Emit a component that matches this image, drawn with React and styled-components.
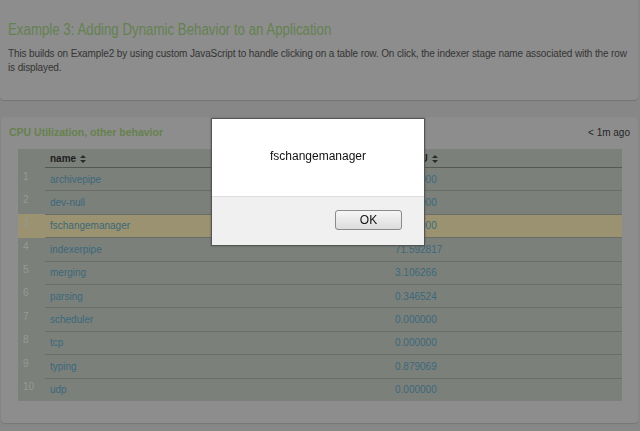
import React from 'react'
import styled, { createGlobalStyle } from 'styled-components'

const GlobalStyle = createGlobalStyle`
  html, body {
    margin: 0;
    padding: 0;
    background: #878787;
    font-family: "Liberation Sans", Arial, sans-serif;
  }
`

const rows = [
  { name: 'archivepipe', cpu: '0.000000' },
  { name: 'dev-null', cpu: '0.000000' },
  { name: 'fschangemanager', cpu: '0.000000', selected: true },
  { name: 'indexerpipe', cpu: '71.592817' },
  { name: 'merging', cpu: '3.106266' },
  { name: 'parsing', cpu: '0.346524' },
  { name: 'scheduler', cpu: '0.000000' },
  { name: 'tcp', cpu: '0.000000' },
  { name: 'typing', cpu: '0.879069' },
  { name: 'udp', cpu: '0.000000' },
]

const Page = styled.div`
  width: 640px;
  height: 431px;
  overflow: hidden;
  display: flex;
  flex-direction: column;
  gap: 17px;
`

const Intro = styled.section`
  margin: 0 2px 0 0;
  height: 100px;
  box-sizing: border-box;
  padding: 20px 8px 0;
  background: #8d8d8d;
  border-radius: 0 0 4px 4px;
  box-shadow: 0 1px 1px rgba(0, 0, 0, 0.15);
`

const Title = styled.h1`
  margin: 0;
  font-size: 16px;
  font-weight: normal;
  color: #648150;
  line-height: 20px;
  white-space: nowrap;
  transform: scaleX(0.83);
  transform-origin: left center;
`

const Description = styled.p`
  margin: 7px 0 0;
  font-size: 10px;
  letter-spacing: -0.12px;
  line-height: 14px;
  color: #343434;
`

const Panel = styled.section`
  margin: 0 2px 0 1px;
  height: 306px;
  box-sizing: border-box;
  padding: 8px 8px 0;
  background: #8d8d8d;
  border-radius: 4px;
  box-shadow: 0 1px 1px rgba(0, 0, 0, 0.12);
`

const PanelHeader = styled.div`
  display: flex;
  justify-content: space-between;
  align-items: center;
  height: 14px;
`

const PanelTitle = styled.h2`
  margin: 0;
  font-size: 10.5px;
  font-weight: bold;
  color: #66814c;
`

const Updated = styled.span`
  font-size: 10px;
  color: #262626;
`

const Table = styled.table`
  margin: 10px 0 0 9px;
  width: 604px;
  border-collapse: collapse;
  background: #7c807a;
  font-size: 10px;
`

const Th = styled.th`
  height: 18px;
  padding: 0 0 0 5px;
  text-align: left;
  font-weight: bold;
  color: #1e1e1e;
  border-bottom: ${p => (p.$index ? 'none' : '1px solid #555855')};
  width: ${p => p.$w || 'auto'};
`

const Tr = styled.tr`
  background: ${p => (p.$selected ? '#9a9270' : 'transparent')};
`

const Td = styled.td`
  height: 22.4px;
  padding: 0 0 0 5px;
  border-top: 1px solid #6a6d68;
  color: #3b687a;
  vertical-align: middle;
`

const IndexTd = styled.td`
  padding: 3px 0 0 5px;
  height: 19.4px;
  color: #969a93;
  vertical-align: top;
`

const SortIcon = () => (
  <svg width="6" height="8" viewBox="0 0 6 8" style={{ marginLeft: 4, verticalAlign: -1 }}>
    <path d="M3 0 L6 3 H0 Z M3 8 L0 5 H6 Z" fill="#2a2a2a" />
  </svg>
)

const Dialog = styled.div`
  position: fixed;
  left: 211px;
  top: 118px;
  width: 214px;
  height: 128px;
  background: #fff;
  border: 1px solid #555;
  box-sizing: border-box;
  display: flex;
  flex-direction: column;
  box-shadow: 0 0 2px rgba(0, 0, 0, 0.3);
`

const Message = styled.div`
  flex: 0 0 77px;
  display: flex;
  align-items: center;
  justify-content: center;
  font-size: 12px;
  color: #111;
  box-sizing: border-box;
  padding-bottom: 4px;
`

const Footer = styled.div`
  flex: 1;
  background: #f0f0f0;
  border-top: 1px solid #dedede;
  display: flex;
  justify-content: flex-end;
  align-items: flex-start;
  padding: 13px 22px 0 0;
`

const OkButton = styled.button`
  width: 67px;
  height: 20px;
  border: 1px solid #8a8a8a;
  border-radius: 3px;
  background: linear-gradient(#f6f6f6, #dcdcdc);
  font-family: "Liberation Sans", Arial, sans-serif;
  font-size: 12px;
  color: #111;
  padding: 0;
`

export default function App() {
  return (
    <Page>
      <GlobalStyle />
      <Intro>
        <Title>Example 3: Adding Dynamic Behavior to an Application</Title>
        <Description>
          This builds on Example2 by using custom JavaScript to handle clicking on a table row. On click, the indexer stage name associated with the row is displayed.
        </Description>
      </Intro>
      <Panel>
        <PanelHeader>
          <PanelTitle>CPU Utilization, other behavior</PanelTitle>
          <Updated>&lt; 1m ago</Updated>
        </PanelHeader>
        <Table>
          <thead>
            <tr>
              <Th $index $w="22px"></Th>
              <Th $w="340px">name<SortIcon /></Th>
              <Th>% CPU<SortIcon /></Th>
            </tr>
          </thead>
          <tbody>
            {rows.map((r, i) => (
              <Tr key={r.name} $selected={r.selected}>
                <IndexTd>{i + 1}</IndexTd>
                <Td>{r.name}</Td>
                <Td>{r.cpu}</Td>
              </Tr>
            ))}
          </tbody>
        </Table>
      </Panel>
      <Dialog>
        <Message>fschangemanager</Message>
        <Footer>
          <OkButton>OK</OkButton>
        </Footer>
      </Dialog>
    </Page>
  )
}
